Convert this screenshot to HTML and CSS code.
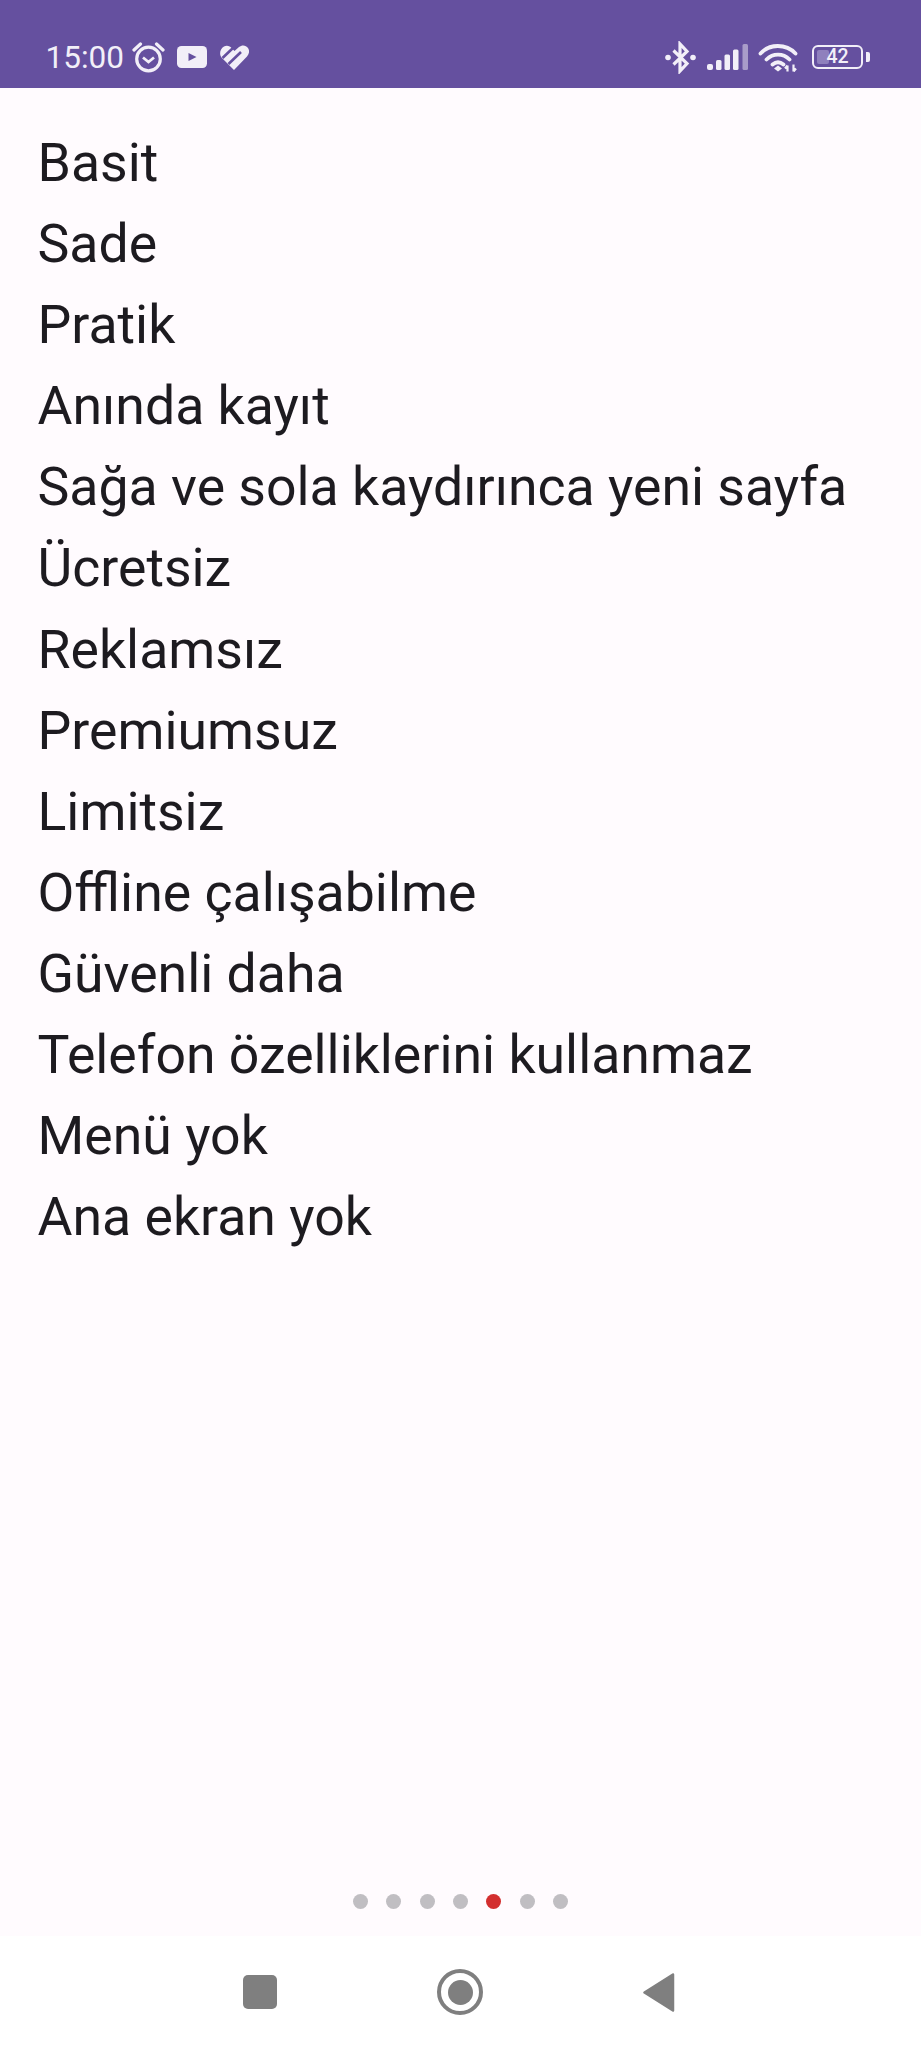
FILE: index.html
```html
<!DOCTYPE html>
<html lang="tr">
<head>
<meta charset="utf-8">
<title>Özellikler</title>
<link rel="stylesheet" href="styles.css">
</head>
<body>
<div class="screen">
  <header class="status">
    <div class="status-left">
      <span class="time">15:00</span>
      <svg class="ic-alarm" viewBox="0 0 33 31" width="33" height="31"><circle cx="16.500" cy="17" r="11.800" fill="none" stroke="#f2eff8" stroke-width="3.200"/><path d="M11 15.500l5.500 4.500 5.500-4.500" fill="none" stroke="#f2eff8" stroke-width="2.800"/><path d="M2 8 8.500 2M31 8 24.500 2" stroke="#f2eff8" stroke-width="3.200" stroke-linecap="round"/></svg>
      <svg class="ic-yt" viewBox="0 0 30 22" width="30" height="22"><rect width="30" height="22" rx="4.500" fill="#f2eff8"/><path d="M11.500 7l8 4-8 4z" fill="#65509f"/></svg>
      <svg class="ic-heart" viewBox="0 0 29 25" width="29" height="25"><path d="M14 25 1.500 12.500C-1 9.500 0 3.500 4 1.500 7 0 10 1 12 3.500L14.500 6 19 2C22-.5 26 0 28 3 30 6 29 9 27 11.500z" fill="#f2eff8"/><path d="M2.500 13 13.500 2.500M8.500 19 21 7" stroke="#65509f" stroke-width="2.600" fill="none"/></svg>
    </div>
    <div class="status-right">
      <svg class="ic-bt" viewBox="0 0 31 33" width="31" height="33"><path d="M8.500 9.500 22 22.500l-7 7.500V3l7 7.500L8.500 23.500" fill="none" stroke="#f2eff8" stroke-width="3.200"/><circle cx="3" cy="16.500" r="2.800" fill="#f2eff8"/><circle cx="28" cy="16.500" r="2.800" fill="#f2eff8"/></svg>
      <svg class="ic-signal" viewBox="0 0 41 26" width="41" height="26"><rect x="0" y="20" width="6" height="6" rx="2" fill="#f2eff8"/><rect x="9" y="16" width="5.500" height="10" rx="1.500" fill="#f2eff8"/><rect x="17.500" y="10.500" width="5.500" height="15.500" rx="1.500" fill="#f2eff8"/><rect x="26" y="5.500" width="5.500" height="20.500" rx="1.500" fill="#f2eff8"/><rect x="35.500" y="0" width="5.500" height="26" rx="1.500" fill="#a99cc9"/></svg>
      <svg class="ic-wifi" viewBox="0 0 40 30" width="40" height="30"><path d="M2.500 11.500C11.500 1.500 28 1.500 37.500 11.500M8.500 17.500c6.500-6.500 16.500-6.500 23 0M14.500 22.500c3.500-2.800 7.500-2.800 11 0" fill="none" stroke="#f2eff8" stroke-width="3.800" stroke-linecap="round"/><path d="M16 26.500 20 23.500l4 3-4 3z" fill="#f2eff8"/><path d="M29.500 23.500v6M27 26.500l2.500-3M35.500 22.500v7M38 26.500l-2.500 3" stroke="#f2eff8" stroke-width="2.200" fill="none"/></svg>
      <div class="battery">
        <div class="battery-body"><span class="battery-fill"></span><span class="battery-num">42</span></div>
        <span class="battery-cap"></span>
      </div>
    </div>
  </header>
  <main class="content">
    <ul class="features">
      <li>Basit</li>
      <li>Sade</li>
      <li>Pratik</li>
      <li>Anında kayıt</li>
      <li>Sağa ve sola kaydırınca yeni sayfa</li>
      <li>Ücretsiz</li>
      <li>Reklamsız</li>
      <li>Premiumsuz</li>
      <li>Limitsiz</li>
      <li>Offline çalışabilme</li>
      <li>Güvenli daha</li>
      <li>Telefon özelliklerini kullanmaz</li>
      <li>Menü yok</li>
      <li>Ana ekran yok</li>
    </ul>
    <div class="dots">
      <span class="dot"></span><span class="dot"></span><span class="dot"></span><span class="dot"></span><span class="dot active"></span><span class="dot"></span><span class="dot"></span>
    </div>
  </main>
  <nav class="navbar">
    <span class="nav-square"></span>
    <span class="nav-circle"><span class="nav-circle-inner"></span></span>
    <svg class="nav-back" viewBox="0 0 32 39" width="32" height="39"><path d="M30 1.500 1.500 19.500 30 37.500z" fill="#7f7f7f" stroke="#7f7f7f" stroke-width="2.500" stroke-linejoin="round"/></svg>
  </nav>
</div>
</body>
</html>
```
FILE: styles.css
```css
* { box-sizing: border-box; }
html, body { margin: 0; padding: 0; }
body { font-family: Roboto, "Liberation Sans", sans-serif; background: #fffbfe; }
.screen { width: 921px; height: 2048px; display: flex; flex-direction: column; overflow: hidden; }

.status {
  height: 88px;
  flex: none;
  background: #65509f;
  color: #f2eff8;
  display: flex;
  justify-content: space-between;
  align-items: center;
  padding: 26px 51px 0 45.500px;
}
.status-left { display: flex; align-items: center; }
.time { font-size: 31.500px; line-height: 36px; width: 86.500px; margin-top: 2px; }
.ic-alarm { margin-right: 12px; }
.ic-yt { margin-right: 13px; }
.status-right { display: flex; align-items: center; }
.ic-bt { margin-right: 11px; }
.ic-signal { margin-right: 10px; }
.ic-wifi { margin-right: 14px; }
.battery { display: flex; align-items: center; gap: 3px; margin-top: -1px; }
.battery-body {
  width: 51px;
  height: 24px;
  border: 2px solid #f2eff8;
  border-radius: 6px;
  position: relative;
  display: flex;
  align-items: center;
  justify-content: center;
}
.battery-fill { position: absolute; left: 3px; top: 3px; bottom: 3px; width: 12px; background: #8f80bd; border-radius: 2px; }
.battery-num { position: relative; font-size: 19.500px; font-weight: 500; line-height: 20px; }
.battery-cap { width: 4px; height: 10px; background: #f2eff8; border-radius: 0 2px 2px 0; }

.content { flex: 1; display: flex; flex-direction: column; padding-top: 34px; }
.features { list-style: none; margin: 0; padding: 0 0 0 37.500px; flex: 1; }
.features li { font-size: 53.600px; line-height: 81.100px; height: 81.100px; color: #1d1b20; white-space: nowrap; }
.dots { display: flex; justify-content: center; gap: 18.300px; margin-bottom: 27px; }
.dot { width: 15px; height: 15px; border-radius: 50%; background: #c0bec2; }
.dot.active { background: #d32f2f; }

.navbar {
  height: 112px;
  flex: none;
  background: #ffffff;
  display: flex;
  align-items: center;
  padding-left: 243px;
}
.nav-square { width: 34px; height: 34px; border-radius: 5px; background: #7f7f7f; margin-right: 160px; }
.nav-circle { width: 46px; height: 46px; border-radius: 50%; border: 4px solid #7f7f7f; display: flex; align-items: center; justify-content: center; margin-right: 160px; }
.nav-circle-inner { width: 25px; height: 25px; border-radius: 50%; background: #7f7f7f; }
```
